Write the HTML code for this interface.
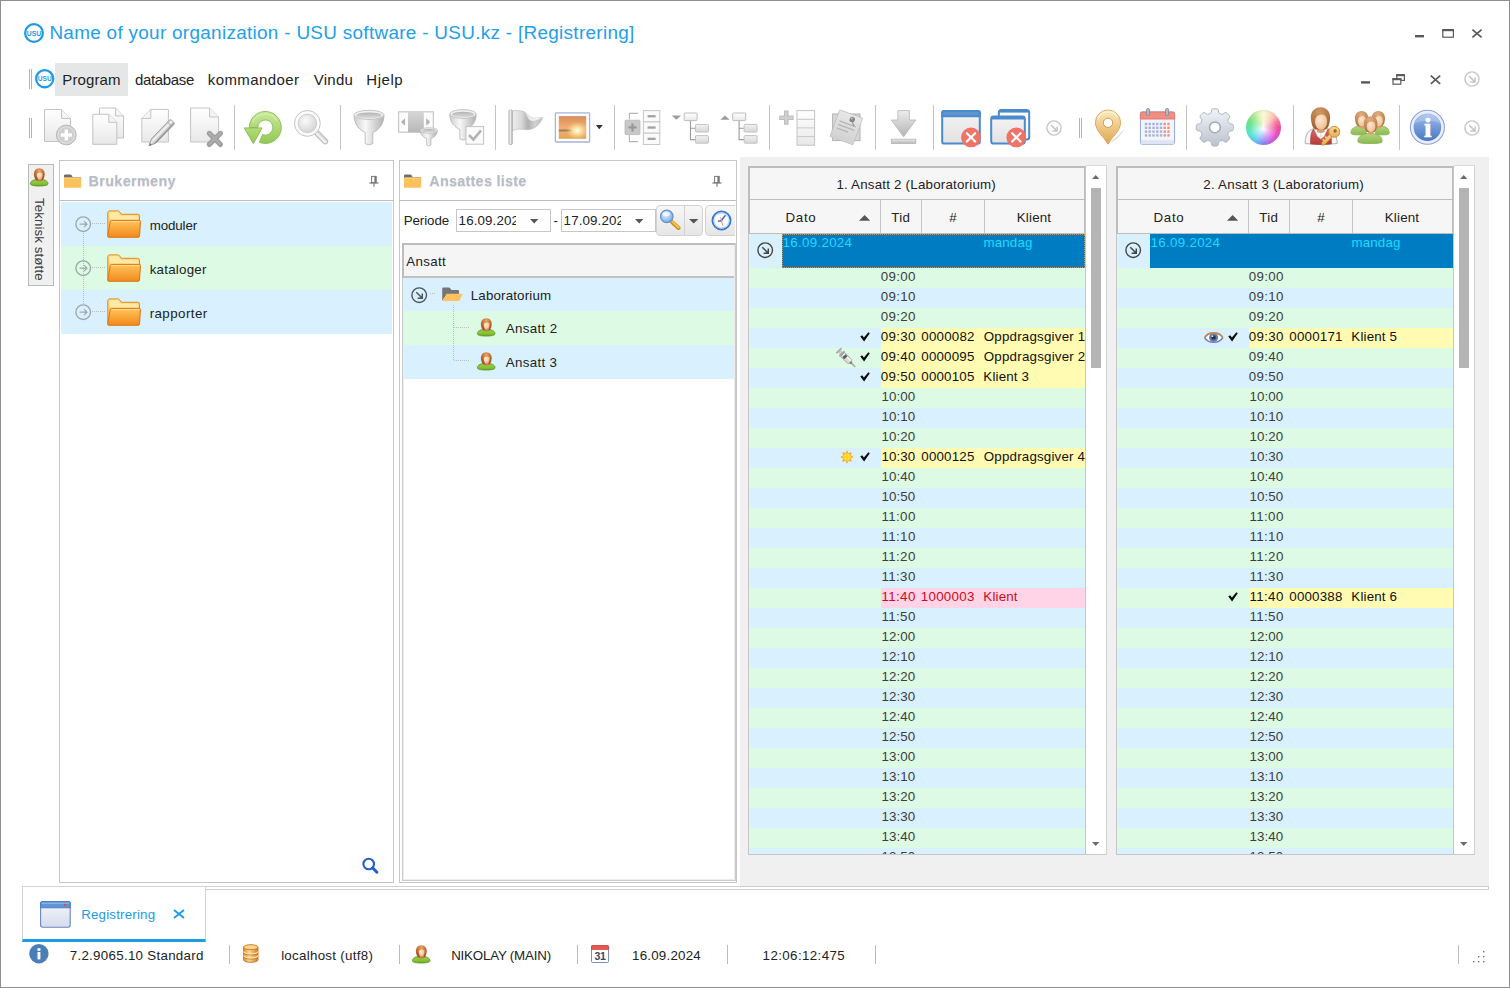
<!DOCTYPE html><html><head><meta charset="utf-8"><title>Registrering</title><style>
*{box-sizing:border-box;margin:0;padding:0}
html,body{width:1510px;height:988px;overflow:hidden;background:#fff}
body{font-family:"Liberation Sans",sans-serif;font-size:13px;color:#222;position:relative}
.a{position:absolute}
.t{position:absolute;white-space:nowrap;line-height:1}
#win{position:absolute;left:0;top:0;width:1510px;height:988px;border:1px solid #8f8f8f;background:#fff}
.sep{position:absolute;width:1px;background:#c4c4c4;top:105px;height:45px}
.grip{position:absolute;width:3px;border-left:1px solid #b4b4b4;border-right:1px solid #b4b4b4}
.panel{position:absolute;border:1px solid #c6c6c6;background:#fff}
.rb{background:#d9f1fe}.rg{background:#ddfae4}
.gh{position:absolute;background:#f6f6f6;border:1px solid #c3c3c3}
.ssep{position:absolute;width:1px;background:#bdbdbd;top:945px;height:19px}
.dh{background-image:linear-gradient(90deg,#bcbcbc 50%,transparent 50%);background-size:2px 1px}
.dv{background-image:linear-gradient(#bcbcbc 50%,transparent 50%);background-size:1px 2px}
</style></head><body>
<div id="win"></div>
<svg width="0" height="0" style="position:absolute"><defs>
<linearGradient id="gPage" x1="0" y1="0" x2="0" y2="1"><stop offset="0" stop-color="#ffffff"/><stop offset="1" stop-color="#e8e8e8"/></linearGradient>
<linearGradient id="gGray" x1="0" y1="0" x2="0" y2="1"><stop offset="0" stop-color="#ededed"/><stop offset="1" stop-color="#b4b4b4"/></linearGradient>
<linearGradient id="gGrayH" x1="0" y1="0" x2="1" y2="0"><stop offset="0" stop-color="#cdcdcd"/><stop offset=".38" stop-color="#f8f8f8"/><stop offset="1" stop-color="#b0b0b0"/></linearGradient>
<linearGradient id="gGreen" x1="0" y1="0" x2="0" y2="1"><stop offset="0" stop-color="#c9e99c"/><stop offset="1" stop-color="#93c855"/></linearGradient>
<linearGradient id="gGreen2" x1="0" y1="0" x2="0" y2="1"><stop offset="0" stop-color="#b2dc7a"/><stop offset="1" stop-color="#93c855"/></linearGradient>
<linearGradient id="gPencil" x1="0" y1="0" x2="0" y2="1"><stop offset="0" stop-color="#c9c9c9"/><stop offset=".4" stop-color="#ededed"/><stop offset="1" stop-color="#a2a2a2"/></linearGradient>
<linearGradient id="gBox" x1="0" y1="0" x2="0" y2="1"><stop offset="0" stop-color="#f2f2f2"/><stop offset="1" stop-color="#d6d6d6"/></linearGradient>
<linearGradient id="gBowlIn" x1="0" y1="0" x2="0" y2="1"><stop offset="0" stop-color="#b2b2b2"/><stop offset="1" stop-color="#dedede"/></linearGradient>
<linearGradient id="gCol" x1="0" y1="0" x2="0" y2="1"><stop offset="0" stop-color="#d6d6d6"/><stop offset="1" stop-color="#b8b8b8"/></linearGradient>
<linearGradient id="gFlag" x1="0" y1="0" x2="1" y2="0"><stop offset="0" stop-color="#ececec"/><stop offset=".3" stop-color="#dadada"/><stop offset=".52" stop-color="#b0b0b0"/><stop offset=".75" stop-color="#d2d2d2"/><stop offset="1" stop-color="#bcbcbc"/></linearGradient>
<linearGradient id="gFolder" x1="0" y1="0" x2="0" y2="1"><stop offset="0" stop-color="#ffc45c"/><stop offset="1" stop-color="#f28a1c"/></linearGradient>
<linearGradient id="gFolderB" x1="0" y1="0" x2="0" y2="1"><stop offset="0" stop-color="#ffe79a"/><stop offset="1" stop-color="#fbb544"/></linearGradient>
<linearGradient id="gGold" x1="0" y1="0" x2="0" y2="1"><stop offset="0" stop-color="#fcebc2"/><stop offset="1" stop-color="#dfa64e"/></linearGradient>
<linearGradient id="gGear" x1="0" y1="0" x2="0" y2="1"><stop offset="0" stop-color="#f1f3f7"/><stop offset="1" stop-color="#bcc2ce"/></linearGradient>
<linearGradient id="gInfo" x1="0" y1="0" x2="0" y2="1"><stop offset="0" stop-color="#9dbdec"/><stop offset="1" stop-color="#4877c4"/></linearGradient>
<linearGradient id="gSun" x1="0" y1="0" x2="0" y2="1"><stop offset="0" stop-color="#d88c5c"/><stop offset=".5" stop-color="#efae72"/><stop offset=".64" stop-color="#e8b27a"/><stop offset="1" stop-color="#e8a24e"/></linearGradient>
<radialGradient id="gSunGlow" cx=".67" cy=".64" r=".4"><stop offset="0" stop-color="#fffdf0"/><stop offset=".35" stop-color="#ffe9a8" stop-opacity=".9"/><stop offset="1" stop-color="#ffd080" stop-opacity="0"/></radialGradient>
<linearGradient id="gBtn" x1="0" y1="0" x2="0" y2="1"><stop offset="0" stop-color="#fcfcfc"/><stop offset="1" stop-color="#dedede"/></linearGradient>
<linearGradient id="gWin" x1="0" y1="0" x2="0" y2="1"><stop offset="0" stop-color="#f4f4f4"/><stop offset="1" stop-color="#e2e2e2"/></linearGradient>
<radialGradient id="gLens" cx=".4" cy=".35" r=".7"><stop offset="0" stop-color="#fbfbfb"/><stop offset="1" stop-color="#d2d2d2"/></radialGradient>
<radialGradient id="gLensB" cx=".4" cy=".35" r=".7"><stop offset="0" stop-color="#e8f4ff"/><stop offset="1" stop-color="#6aa6e8"/></radialGradient>
<radialGradient id="gWheelW" cx=".5" cy=".55" r=".5"><stop offset="0" stop-color="#fff" stop-opacity="1"/><stop offset=".35" stop-color="#fff" stop-opacity=".75"/><stop offset="1" stop-color="#fff" stop-opacity="0"/></radialGradient>
<radialGradient id="gSkin" cx=".35" cy=".3" r=".8"><stop offset="0" stop-color="#fff0dc"/><stop offset=".6" stop-color="#f8c89c"/><stop offset="1" stop-color="#d88c58"/></radialGradient>
<radialGradient id="gHair" cx=".5" cy=".22" r=".75"><stop offset="0" stop-color="#eaa868"/><stop offset=".45" stop-color="#c87438"/><stop offset="1" stop-color="#9a4a20"/></radialGradient>
<linearGradient id="gBody" x1="0" y1="0" x2="0" y2="1"><stop offset="0" stop-color="#9ccf4c"/><stop offset=".6" stop-color="#86c434"/><stop offset="1" stop-color="#6aa826"/></linearGradient>
<linearGradient id="gDb" x1="0" y1="0" x2="1" y2="0"><stop offset="0" stop-color="#e38e2c"/><stop offset=".4" stop-color="#fdd896"/><stop offset="1" stop-color="#d47e22"/></linearGradient>
<linearGradient id="gWinIco" x1="0" y1="0" x2="0" y2="1"><stop offset="0" stop-color="#f4f6fc"/><stop offset="1" stop-color="#d7dcec"/></linearGradient>
</defs></svg>
<svg class="a" style="left:23.9px;top:22.6px;overflow:visible" width="20" height="20" viewBox="0 0 20 20" ><circle cx="10.0" cy="10.0" r="8.85" fill="#fff" stroke="#1e9be6" stroke-width="2.3"/><text x="10.0" y="12.664" font-family="Liberation Sans, sans-serif" font-weight="bold" font-size="7.40" text-anchor="middle" fill="#1e9be6" textLength="14.40" lengthAdjust="spacingAndGlyphs">USU</text></svg>
<div class="t" style="left:49.39px;top:24.3px;font-size:18.9px;color:#22a0e8;letter-spacing:0.31px;">Name of your organization - USU software - USU.kz - [Registrering]</div>
<svg class="a" style="left:0px;top:0px;overflow:visible" width="1510" height="60" viewBox="0 0 1510 60" ><rect x="1415" y="35" width="9" height="2.4" fill="#5a5a5a"/><rect x="1442.8" y="30" width="10.6" height="7.2" fill="none" stroke="#5a5a5a" stroke-width="1.2"/><rect x="1442.2" y="29" width="11.8" height="2.2" fill="#5a5a5a"/><path d="M1472.4 29.6L1481.6 37.4M1481.6 29.6L1472.4 37.4" stroke="#5a5a5a" stroke-width="1.7" fill="none"/></svg>
<div class="grip" style="left:29px;top:69px;height:20px"></div>
<div class="a " style="left:55px;top:63px;width:73px;height:33px;background:#e5e6e6"></div>
<svg class="a" style="left:35.1px;top:69.2px;overflow:visible" width="19.4" height="19.4" viewBox="0 0 19.4 19.4" ><circle cx="9.7" cy="9.7" r="8.549999999999999" fill="#fff" stroke="#1e9be6" stroke-width="2.3"/><text x="9.7" y="12.28408" font-family="Liberation Sans, sans-serif" font-weight="bold" font-size="7.18" text-anchor="middle" fill="#1e9be6" textLength="13.97" lengthAdjust="spacingAndGlyphs">USU</text></svg>
<div class="t" style="left:62.3px;top:72.2px;font-size:15px;color:#222;letter-spacing:0.108px;">Program</div>
<div class="t" style="left:134.9px;top:72.2px;font-size:15px;color:#222;letter-spacing:-0.321px;">database</div>
<div class="t" style="left:207.82px;top:72.2px;font-size:15px;color:#222;letter-spacing:0.397px;">kommandoer</div>
<div class="t" style="left:313.73px;top:72.2px;font-size:15px;color:#222;letter-spacing:0.287px;">Vindu</div>
<div class="t" style="left:366.3px;top:72.2px;font-size:15px;color:#222;letter-spacing:0.525px;">Hjelp</div>
<svg class="a" style="left:0px;top:0px;overflow:visible" width="1510" height="100" viewBox="0 0 1510 100" ><rect x="1361" y="81.2" width="9" height="2.4" fill="#5a5a5a"/><rect x="1396.8" y="74.8" width="7.6" height="5.6" fill="#fff" stroke="#5a5a5a" stroke-width="1.2"/><rect x="1396.2" y="74.2" width="8.8" height="2" fill="#5a5a5a"/><rect x="1393" y="78.8" width="7.8" height="5.4" fill="#fff" stroke="#5a5a5a" stroke-width="1.2"/><rect x="1392.4" y="78.2" width="9" height="2" fill="#5a5a5a"/><path d="M1430.8 75.6L1440.2 83.8M1440.2 75.6L1430.8 83.8" stroke="#5a5a5a" stroke-width="1.7" fill="none"/></svg><svg class="a" style="left:1464px;top:71.4px;overflow:visible" width="16" height="16" viewBox="0 0 16 16" ><circle cx="8.0" cy="8.0" r="7.1" fill="none" stroke="#c6c6c6" stroke-width="1.4"/><path d="M5.1 5.1L10.9 10.9M11.1 6.4V11.1H6.4" stroke="#c6c6c6" stroke-width="1.5" fill="none"/></svg>
<div class="grip" style="left:29px;top:118px;height:20px"></div>
<div class="grip" style="left:1079px;top:118px;height:20px"></div>
<div class="sep" style="left:234px"></div>
<div class="sep" style="left:340px"></div>
<div class="sep" style="left:495px"></div>
<div class="sep" style="left:614px"></div>
<div class="sep" style="left:769px"></div>
<div class="sep" style="left:875px"></div>
<div class="sep" style="left:933px"></div>
<div class="sep" style="left:1186px"></div>
<div class="sep" style="left:1293px"></div>
<div class="sep" style="left:1399px"></div>
<svg class="a" style="left:0px;top:100px;overflow:visible" width="1510" height="55" viewBox="0 100 1510 55" ><path d="M44.5 109.5H61.5L70.5 118.5V141.5H44.5Z" fill="url(#gPage)" stroke="#c4c4c4" stroke-width="1"/><path d="M61.5 109.5V118.5H70.5" fill="#f4f4f4" stroke="#c4c4c4" stroke-width="1"/><circle cx="66.3" cy="135" r="9.9" fill="#cfcfcf" stroke="#b9b9b9" stroke-width="1"/><circle cx="66.3" cy="135" r="8.3" fill="none" stroke="#e3e3e3" stroke-width="1"/><path d="M66.3 129.4V140.6M60.7 135H71.9" stroke="#fff" stroke-width="3.4"/><path d="M99.5 108H115.5L123.5 116V138H99.5Z" fill="url(#gPage)" stroke="#c4c4c4" stroke-width="1"/><path d="M115.5 108V116H123.5" fill="#f4f4f4" stroke="#c4c4c4" stroke-width="1"/><path d="M92.8 114.3H108.8L116.8 122.3V144.3H92.8Z" fill="url(#gPage)" stroke="#c4c4c4" stroke-width="1"/><path d="M108.8 114.3V122.3H116.8" fill="#f4f4f4" stroke="#c4c4c4" stroke-width="1"/><path d="M150.8 109.4H168.4V142.0H141.8V118.4Z" fill="url(#gPage)" stroke="#c4c4c4" stroke-width="1"/><path d="M150.8 109.4V118.4H141.8" fill="#f4f4f4" stroke="#c4c4c4" stroke-width="1"/><g transform="translate(148.9 145.9) rotate(-46)"><path d="M0 0L7 -3.1H32.6Q34.2 -3.1 34.2 -1.5V1.5Q34.2 3.1 32.6 3.1H7Z" fill="url(#gPencil)" stroke="#9c9c9c" stroke-width=".9" stroke-linejoin="round"/><path d="M7 -.6H33.6" stroke="#f2f2f2" stroke-width="1.3"/><path d="M7 2.4H33.6" stroke="#8e8e8e" stroke-width=".9"/><path d="M0 0L2.8 -1.25V1.25Z" fill="#7a7a7a"/><path d="M30 -3V3" stroke="#9c9c9c" stroke-width=".8"/></g><path d="M190.6 108H209.6L218.6 117V142H190.6Z" fill="url(#gPage)" stroke="#c4c4c4" stroke-width="1"/><path d="M209.6 108V117H218.6" fill="#f4f4f4" stroke="#c4c4c4" stroke-width="1"/><path d="M209.3 133.4L220.4 144.4M220.4 133.4L209.3 144.4" stroke="#9e9e9e" stroke-width="5.2" stroke-linecap="round"/><path d="M209.3 133.2L220 143.8M220.4 133.2L209.6 143.8" stroke="#adadad" stroke-width="2.4" stroke-linecap="round"/><path d="M249.30 127.50A16.0 16.0 0 1 1 259.31 142.33L262.45 134.55A7.6 7.6 0 1 0 257.70 127.50Z" fill="url(#gGreen)" stroke="#86bc4c" stroke-width=".9"/><path d="M244.2 127.9H262.2L253.3 143.6Z" fill="url(#gGreen2)" stroke="#86bc4c" stroke-width=".9" stroke-linejoin="round"/><path d="M252.52 122.85A13.6 13.6 0 0 1 277.08 120.70" fill="none" stroke="#d3efa6" stroke-width="1.6" opacity=".8"/><path d="M315.6 131.6L325.2 141.4" stroke="#bdbdbd" stroke-width="6" stroke-linecap="round"/><path d="M315.6 131.6L325.2 141.4" stroke="#f1f1f1" stroke-width="3.6" stroke-linecap="round"/><path d="M316.6 131L326.2 140.6" stroke="#d4d4d4" stroke-width="1.4" stroke-linecap="round"/><circle cx="307.4" cy="123.4" r="12.9" fill="#fbfbfb" stroke="#c4c4c4" stroke-width="1"/><circle cx="307.4" cy="123.4" r="9.2" fill="url(#gLens)" stroke="#cdcdcd" stroke-width="1"/><path d="M354 114.89999999999999C354 125.81 361.00 130.74 365.20 132.50V143.70Q369 145.90 372.80 143.70V132.50C377.00 130.74 384 125.81 384 114.89999999999999Z" fill="url(#gGrayH)" stroke="#b4b4b4" stroke-width=".8"/><ellipse cx="369" cy="114.89999999999999" rx="15" ry="4.6" fill="#f0f0f0" stroke="#c0c0c0" stroke-width=".9"/><ellipse cx="369" cy="115.45" rx="12.60" ry="3.04" fill="url(#gBowlIn)"/><rect x="398.6" y="111.8" width="34.8" height="20.4" fill="#fcfcfc" stroke="#cbcbcb" stroke-width="1.3"/><rect x="408" y="111.8" width="15.8" height="20.4" fill="url(#gCol)"/><path d="M401 122L405 118.2V125.8Z" fill="#b2b2b2"/><path d="M430.2 122L426.2 118.2V125.8Z" fill="#b2b2b2"/><path d="M420.3 130.5C420.3 135.40 424.32 137.61 426.70 138.40V145.00Q428.8 147.20 430.90 145.00V138.40C433.28 137.61 437.3 135.40 437.3 130.5Z" fill="url(#gGrayH)" stroke="#b4b4b4" stroke-width=".8"/><ellipse cx="428.8" cy="130.5" rx="8.5" ry="2.7" fill="#f0f0f0" stroke="#c0c0c0" stroke-width=".9"/><ellipse cx="428.8" cy="130.82" rx="7.14" ry="1.78" fill="url(#gBowlIn)"/><path d="M449.8 114.0C449.8 123.55 456.10 127.86 459.80 129.40V139.00Q463 141.20 466.20 139.00V129.40C469.90 127.86 476.2 123.55 476.2 114.0Z" fill="url(#gGrayH)" stroke="#b4b4b4" stroke-width=".8"/><ellipse cx="463" cy="114.0" rx="13.2" ry="4.4" fill="#f0f0f0" stroke="#c0c0c0" stroke-width=".9"/><ellipse cx="463" cy="114.53" rx="11.09" ry="2.90" fill="url(#gBowlIn)"/><rect x="466" y="126.6" width="17.6" height="17.6" fill="#fbfbfb" stroke="#c2c2c2" stroke-width="1"/><path d="M469 135L473.4 139.6L481 130.4" stroke="#b4b4b4" stroke-width="2.6" fill="none"/><path d="M512.3 111C516 110.2 521 110.6 524.5 112C528 113.6 529 117.6 533 118.2C536 118.6 540 117.6 542.6 117.6C541.6 121 539 124.6 535.6 127C532.6 129.2 529 130 526 129.6C521.6 129 517 128.6 512.3 130.6Z" fill="url(#gFlag)" stroke="#c2c2c2" stroke-width=".8"/><path d="M524.5 112C528 113.6 529 117.6 533 118.2C536 118.6 540 117.6 542.6 117.6C539 120 534 121.6 530.6 120.6C527.6 119.6 527 114.6 524.5 112Z" fill="#fafafa" opacity=".75"/><rect x="508.9" y="110" width="3.4" height="34.6" rx="1.2" fill="url(#gGrayH)" stroke="#a9a9a9" stroke-width=".7"/><rect x="555.4" y="112.8" width="34.2" height="29.2" rx=".8" fill="#fff" stroke="#a5b4df" stroke-width="1.3"/><rect x="558.8" y="116.1" width="27.4" height="22.7" fill="url(#gSun)"/><path d="M558.8 129.6H569L574 130.6L569 131.6H558.8Z" fill="#8c6a4c" opacity=".75"/><rect x="558.8" y="116.1" width="27.4" height="22.7" fill="url(#gSunGlow)"/><path d="M595.8 125H602.8L599.3 129.2Z" fill="#333"/><path d="M638 113.4H629.4V119.6M629.4 135V141.6H638" stroke="#b5b5b5" stroke-width="1.1" fill="none"/><rect x="625" y="120.2" width="15" height="14.4" rx="1" fill="#c8c8c8" stroke="#b8b8b8" stroke-width=".8"/><path d="M632.5 123.4V131.4M628.4 127.4H636.6" stroke="#999" stroke-width="2.3"/><rect x="643.4" y="110.6" width="16.4" height="11.3" fill="#fafafa" stroke="#c6c6c6" stroke-width="1"/><rect x="647.6" y="115.1" width="8" height="2.3" fill="#a2a2a2"/><rect x="643.4" y="121.89999999999999" width="16.4" height="11.3" fill="#fafafa" stroke="#c6c6c6" stroke-width="1"/><rect x="647.6" y="126.39999999999999" width="8" height="2.3" fill="#a2a2a2"/><rect x="643.4" y="133.2" width="16.4" height="11.3" fill="#fafafa" stroke="#c6c6c6" stroke-width="1"/><rect x="647.6" y="137.7" width="8" height="2.3" fill="#a2a2a2"/><path d="M671.7 115.4H681.1L676.4000000000001 119.8Z" fill="#9d9d9d"/><path d="M690.5 120.6V139.6H695.7M690.5 128.2H695.7" stroke="#9a9a9a" stroke-width="1.1" fill="none"/><rect x="684.1" y="113" width="13" height="7.6" rx="1" fill="url(#gPage)" stroke="#bdbdbd" stroke-width="1"/><rect x="695.5" y="124.4" width="13" height="7.6" rx="1" fill="url(#gBox)" stroke="#c2c2c2" stroke-width="1"/><rect x="695.5" y="135.6" width="13" height="7.6" rx="1" fill="url(#gBox)" stroke="#c2c2c2" stroke-width="1"/><path d="M720.3 119.8H729.6999999999999L725.0 115.4Z" fill="#9d9d9d"/><path d="M739.0999999999999 120.6V139.6H744.3M739.0999999999999 128.2H744.3" stroke="#9a9a9a" stroke-width="1.1" fill="none"/><rect x="732.6999999999999" y="113" width="13" height="7.6" rx="1" fill="url(#gPage)" stroke="#bdbdbd" stroke-width="1"/><rect x="744.0999999999999" y="124.4" width="13" height="7.6" rx="1" fill="url(#gBox)" stroke="#c2c2c2" stroke-width="1"/><rect x="744.0999999999999" y="135.6" width="13" height="7.6" rx="1" fill="url(#gBox)" stroke="#c2c2c2" stroke-width="1"/><path d="M786.3 110.6V124.8M779.2 117.7H793.6" stroke="#bdbdbd" stroke-width="4.6"/><path d="M786.3 111.6V123.8M780.2 117.7H792.6" stroke="#d0d0d0" stroke-width="2.4"/><rect x="797" y="110.6" width="17.6" height="34.6" fill="url(#gPage)" stroke="#c4c4c4" stroke-width="1"/><path d="M797 119.3H814.6M797 127.9H814.6M797 136.6H814.6" stroke="#c9c9c9" stroke-width="1"/><rect x="832.6" y="114" width="27.4" height="26.6" fill="#d6d6d6" stroke="#b2b2b2" stroke-width="1"/><g transform="rotate(20 846.3 127.3)"><rect x="834.2" y="113.2" width="24.2" height="28.2" fill="url(#gGray)" stroke="#b4b4b4" stroke-width=".8"/><rect x="834.2" y="113.2" width="24.2" height="28.2" fill="#e4e4e4" opacity=".6"/><path d="M837.6 123.6H855M837.6 127.4H855M837.6 131.2H849.6" stroke="#b4b4b4" stroke-width="1.3"/><circle cx="849.2" cy="118" r="2.7" fill="#858585"/><circle cx="848.4" cy="117.2" r="1" fill="#c4c4c4"/><path d="M849.8 120.2L853.4 123.6" stroke="#9a9a9a" stroke-width="1.2"/></g><path d="M897.8 110.6H909.4V120H915.8L903.6 136.8L891.3 120H897.8Z" fill="url(#gGray)" stroke="#b5b5b5" stroke-width=".8"/><rect x="891.3" y="139.2" width="24.5" height="4.2" fill="url(#gGray)" stroke="#b5b5b5" stroke-width=".8"/><rect x="942.2" y="111" width="37.6" height="32.6" rx="2.2" fill="url(#gWin)" stroke="#4a8bcb" stroke-width="2"/><path d="M942.2 116.2V113.2Q942.2 111 944.4 111H977.6Q979.8 111 979.8 113.2V116.2Z" fill="#5f94cf" stroke="#4a8bcb" stroke-width="2"/><circle cx="971" cy="137.4" r="9.9" fill="#ef7467"/><path d="M966.842 133.24200000000002L975.158 141.558M975.158 133.24200000000002L966.842 141.558" stroke="#fff" stroke-width="2.2" stroke-linecap="round"/><rect x="998.8" y="110" width="30.4" height="29.6" rx="2.6" fill="#fbfbfb" stroke="#4a8bcb" stroke-width="2"/><path d="M999.4 111.4H1028.6" stroke="#4a8bcb" stroke-width="2.4"/><rect x="991.2" y="116.4" width="33.6" height="27.2" rx="2.4" fill="url(#gWin)" stroke="#4a8bcb" stroke-width="2"/><path d="M991.8 118H1024.2" stroke="#4a8bcb" stroke-width="2.8"/><circle cx="1016.3" cy="137.4" r="9.9" fill="#ef7467"/><path d="M1012.1419999999999 133.24200000000002L1020.458 141.558M1020.458 133.24200000000002L1012.1419999999999 141.558" stroke="#fff" stroke-width="2.2" stroke-linecap="round"/><path d="M1110 143.6C1114 138 1121 134 1124.4 128.6C1122 135 1116 140 1110 143.6Z" fill="#9a9a9a" opacity=".35"/><path d="M1108 144.2C1104 137 1095.4 130.6 1095.4 122.6A12.6 12.6 0 0 1 1120.6 122.6C1120.6 130.6 1112 137 1108 144.2Z" fill="url(#gGold)" stroke="#d9a24c" stroke-width=".9"/><circle cx="1108" cy="122.8" r="4.7" fill="#fff" stroke="#d19a48" stroke-width="1"/><path d="M1098 119.4A10.4 10.4 0 0 1 1117 116.6" stroke="#fff6d8" stroke-width="1.6" fill="none" opacity=".8"/><rect x="1140.4" y="112" width="34.2" height="32.2" rx="1.8" fill="#f3f5fc" stroke="#95a5d6" stroke-width="1"/><path d="M1140.4 119V113.8Q1140.4 112 1142.2 112H1172.8Q1174.6 112 1174.6 113.8V119Z" fill="#f08e84" stroke="#e07a70" stroke-width="1"/><rect x="1140.9" y="140.2" width="33.2" height="3.6" fill="#dfe4f5"/><rect x="1146.6" y="108.6" width="3" height="6.8" rx="1" fill="#b4bccb" stroke="#76839b" stroke-width=".8"/><rect x="1165.6" y="108.6" width="3" height="6.8" rx="1" fill="#b4bccb" stroke="#76839b" stroke-width=".8"/><rect x="1144.8" y="122.8" width="2.4" height="2.4" fill="#a6b2de"/><rect x="1148.55" y="122.8" width="2.4" height="2.4" fill="#a6b2de"/><rect x="1152.3" y="122.8" width="2.4" height="2.4" fill="#a6b2de"/><rect x="1156.05" y="122.8" width="2.4" height="2.4" fill="#a6b2de"/><rect x="1159.8" y="122.8" width="2.4" height="2.4" fill="#a6b2de"/><rect x="1163.55" y="122.8" width="2.4" height="2.4" fill="#f19080"/><rect x="1167.3" y="122.8" width="2.4" height="2.4" fill="#f19080"/><rect x="1144.8" y="126.6" width="2.4" height="2.4" fill="#a6b2de"/><rect x="1148.55" y="126.6" width="2.4" height="2.4" fill="#a6b2de"/><rect x="1152.3" y="126.6" width="2.4" height="2.4" fill="#a6b2de"/><rect x="1156.05" y="126.6" width="2.4" height="2.4" fill="#a6b2de"/><rect x="1159.8" y="126.6" width="2.4" height="2.4" fill="#a6b2de"/><rect x="1163.55" y="126.6" width="2.4" height="2.4" fill="#f19080"/><rect x="1167.3" y="126.6" width="2.4" height="2.4" fill="#f19080"/><rect x="1144.8" y="130.4" width="2.4" height="2.4" fill="#a6b2de"/><rect x="1148.55" y="130.4" width="2.4" height="2.4" fill="#a6b2de"/><rect x="1152.3" y="130.4" width="2.4" height="2.4" fill="#a6b2de"/><rect x="1156.05" y="130.4" width="2.4" height="2.4" fill="#a6b2de"/><rect x="1159.8" y="130.4" width="2.4" height="2.4" fill="#a6b2de"/><rect x="1163.55" y="130.4" width="2.4" height="2.4" fill="#f19080"/><rect x="1167.3" y="130.4" width="2.4" height="2.4" fill="#f19080"/><rect x="1144.8" y="134.2" width="2.4" height="2.4" fill="#a6b2de"/><rect x="1148.55" y="134.2" width="2.4" height="2.4" fill="#a6b2de"/><rect x="1152.3" y="134.2" width="2.4" height="2.4" fill="#a6b2de"/><rect x="1156.05" y="134.2" width="2.4" height="2.4" fill="#a6b2de"/><rect x="1159.8" y="134.2" width="2.4" height="2.4" fill="#a6b2de"/><rect x="1163.55" y="134.2" width="2.4" height="2.4" fill="#f19080"/><rect x="1167.3" y="134.2" width="2.4" height="2.4" fill="#f19080"/><path d="M1233.59 127.40L1233.58 127.89L1233.56 128.38L1233.51 128.86L1233.43 129.35L1233.28 129.82L1232.97 130.26L1232.31 130.63L1231.24 130.87L1230.16 131.06L1229.47 131.31L1229.11 131.61L1228.89 131.95L1228.72 132.29L1228.57 132.65L1228.43 133.00L1228.28 133.36L1228.14 133.71L1228.01 134.08L1227.92 134.47L1227.97 134.94L1228.28 135.60L1228.91 136.50L1229.49 137.43L1229.70 138.15L1229.61 138.69L1229.38 139.13L1229.09 139.52L1228.78 139.90L1228.45 140.26L1228.11 140.61L1227.76 140.95L1227.40 141.28L1227.02 141.59L1226.63 141.88L1226.19 142.11L1225.65 142.20L1224.93 141.99L1224.00 141.41L1223.10 140.78L1222.44 140.47L1221.97 140.42L1221.58 140.51L1221.21 140.64L1220.86 140.78L1220.50 140.93L1220.15 141.07L1219.79 141.22L1219.45 141.39L1219.11 141.61L1218.81 141.97L1218.56 142.66L1218.37 143.74L1218.13 144.81L1217.76 145.47L1217.32 145.78L1216.85 145.93L1216.36 146.01L1215.88 146.06L1215.39 146.08L1214.90 146.09L1214.41 146.08L1213.92 146.06L1213.44 146.01L1212.95 145.93L1212.48 145.78L1212.04 145.47L1211.67 144.81L1211.43 143.74L1211.24 142.66L1210.99 141.97L1210.69 141.61L1210.35 141.39L1210.01 141.22L1209.65 141.07L1209.30 140.93L1208.94 140.78L1208.59 140.64L1208.22 140.51L1207.83 140.42L1207.36 140.47L1206.70 140.78L1205.80 141.41L1204.87 141.99L1204.15 142.20L1203.61 142.11L1203.17 141.88L1202.78 141.59L1202.40 141.28L1202.04 140.95L1201.69 140.61L1201.35 140.26L1201.02 139.90L1200.71 139.52L1200.42 139.13L1200.19 138.69L1200.10 138.15L1200.31 137.43L1200.89 136.50L1201.52 135.60L1201.83 134.94L1201.88 134.47L1201.79 134.08L1201.66 133.71L1201.52 133.36L1201.37 133.00L1201.23 132.65L1201.08 132.29L1200.91 131.95L1200.69 131.61L1200.33 131.31L1199.64 131.06L1198.56 130.87L1197.49 130.63L1196.83 130.26L1196.52 129.82L1196.37 129.35L1196.29 128.86L1196.24 128.38L1196.22 127.89L1196.21 127.40L1196.22 126.91L1196.24 126.42L1196.29 125.94L1196.37 125.45L1196.52 124.98L1196.83 124.54L1197.49 124.17L1198.56 123.93L1199.64 123.74L1200.33 123.49L1200.69 123.19L1200.91 122.85L1201.08 122.51L1201.23 122.15L1201.37 121.80L1201.52 121.44L1201.66 121.09L1201.79 120.72L1201.88 120.33L1201.83 119.86L1201.52 119.20L1200.89 118.30L1200.31 117.37L1200.10 116.65L1200.19 116.11L1200.42 115.67L1200.71 115.28L1201.02 114.90L1201.35 114.54L1201.69 114.19L1202.04 113.85L1202.40 113.52L1202.78 113.21L1203.17 112.92L1203.61 112.69L1204.15 112.60L1204.87 112.81L1205.80 113.39L1206.70 114.02L1207.36 114.33L1207.83 114.38L1208.22 114.29L1208.59 114.16L1208.94 114.02L1209.30 113.87L1209.65 113.73L1210.01 113.58L1210.35 113.41L1210.69 113.19L1210.99 112.83L1211.24 112.14L1211.43 111.06L1211.67 109.99L1212.04 109.33L1212.48 109.02L1212.95 108.87L1213.44 108.79L1213.92 108.74L1214.41 108.72L1214.90 108.71L1215.39 108.72L1215.88 108.74L1216.36 108.79L1216.85 108.87L1217.32 109.02L1217.76 109.33L1218.13 109.99L1218.37 111.06L1218.56 112.14L1218.81 112.83L1219.11 113.19L1219.45 113.41L1219.79 113.58L1220.15 113.73L1220.50 113.87L1220.86 114.02L1221.21 114.16L1221.58 114.29L1221.97 114.38L1222.44 114.33L1223.10 114.02L1224.00 113.39L1224.93 112.81L1225.65 112.60L1226.19 112.69L1226.63 112.92L1227.02 113.21L1227.40 113.52L1227.76 113.85L1228.11 114.19L1228.45 114.54L1228.78 114.90L1229.09 115.28L1229.38 115.67L1229.61 116.11L1229.70 116.65L1229.49 117.37L1228.91 118.30L1228.28 119.20L1227.97 119.86L1227.92 120.33L1228.01 120.72L1228.14 121.09L1228.28 121.44L1228.43 121.80L1228.57 122.15L1228.72 122.51L1228.89 122.85L1229.11 123.19L1229.47 123.49L1230.16 123.74L1231.24 123.93L1232.31 124.17L1232.97 124.54L1233.28 124.98L1233.43 125.45L1233.51 125.94L1233.56 126.42L1233.58 126.91Z" fill="url(#gGear)" stroke="#a9afbc" stroke-width="1" stroke-linejoin="round"/><circle cx="1214.9" cy="127.4" r="5.4" fill="#fff" stroke="#a3a9b6" stroke-width="1.5"/><circle cx="1427.4" cy="127.3" r="17" fill="#e9eefa" stroke="#8da4d6" stroke-width="1.1"/><circle cx="1427.4" cy="127.3" r="13.8" fill="url(#gInfo)"/><path d="M1414.6 124A13.2 13.2 0 0 1 1440.2 124C1434 119.6 1421 119.6 1414.6 124Z" fill="#fff" opacity=".22"/><text x="1427.7" y="137" font-family="Liberation Serif, serif" font-weight="bold" font-size="27" text-anchor="middle" fill="#fff" stroke="#fff" stroke-width=".7">i</text></svg><div class="a" style="left:1246.2px;top:110px;width:35px;height:35px;border-radius:50%;background:radial-gradient(ellipse 55% 30% at 50% 13%,rgba(255,255,255,.6) 0,rgba(255,255,255,0) 100%),radial-gradient(circle at 50% 54%,rgba(255,255,255,1) 0,rgba(255,255,255,.6) 20%,rgba(255,255,255,0) 55%),conic-gradient(from 0deg,#f6f29a,#f8aa9c 12%,#f04c9a 25%,#e24cd4 37%,#9478f0 49%,#5cc4f4 58%,#56e6d0 68%,#5ee69a 77%,#86e070 88%,#f6f29a);box-shadow:inset 0 0 2px rgba(150,150,150,.45)"></div><svg class="a" style="left:0px;top:100px;overflow:visible" width="1510" height="55" viewBox="0 100 1510 55" ><path d="M1305.2 143.6C1305 136 1307.4 130.6 1313.4 128.6L1320.6 127.2L1328 128.6C1334 130.6 1337 136 1337.2 143.6Q1321 145.6 1305.2 143.6Z" fill="#f6f6f6" stroke="#a9a9a9" stroke-width=".9"/><path d="M1310.6 143.9C1310.4 137 1311 132 1313.6 129L1320.8 138.6L1328 129C1330.8 132 1331.6 137 1331.4 143.9Q1321 145 1310.6 143.9Z" fill="url(#gVest)" stroke="#a84444" stroke-width=".7"/><path d="M1314 128.4L1317.6 127.4L1320.8 133.6L1324 127.4L1327.6 128.4L1324.2 136.2L1320.8 139L1317.4 136.2Z" fill="#fff" stroke="#c4c4c4" stroke-width=".6"/><path d="M1320.8 133.8L1322.6 136L1320.8 138.4L1319 136Z" fill="#e4e4e4"/><path d="M1317.24 125.63H1324.34L1324.72 132.08Q1320.88 133.93 1316.85 132.08Z" fill="#d8a070"/><path d="M1320.50 107.20C1327.41 107.20 1330.68 112.96 1330.10 118.72C1329.72 124.25 1328.18 127.94 1325.68 129.55L1315.32 129.55C1312.82 127.94 1311.28 124.25 1310.90 118.72C1310.32 112.96 1313.59 107.20 1320.50 107.20Z" fill="url(#gHair2)"/><ellipse cx="1321.08" cy="121.72" rx="6.05" ry="8.18" fill="url(#gSkin2)"/><path d="M1313.97 117.34C1316.66 112.73 1322.42 111.81 1327.41 115.49C1324.34 114.11 1318.58 114.11 1313.97 117.34Z" fill="url(#gHair2)"/><g transform="translate(1334.3 131.8) rotate(43)"><path d="M-1.8 4.6H1.8V16.4L0 18.2L-1.8 16.4V14.4H-3.6V12.4H-1.8V10.8H-3.6V8.8H-1.8Z" fill="url(#gKey)" stroke="#c98e3c" stroke-width=".8"/><circle cx="0" cy="0" r="5.5" fill="url(#gKey)" stroke="#c98e3c" stroke-width=".9"/><circle cx="0" cy="-1.2" r="1.7" fill="#9c6a3a"/></g><path d="M1351 133.03C1351 128.53 1354.39 126.4 1358.7 126.4C1363.01 126.4 1366.4 128.53 1366.4 133.03C1366.4 134.73 1363.32 134.9 1358.7 134.9C1354.08 134.9 1351 134.73 1351 133.03Z" fill="url(#gBody2)" stroke="#86ac52" stroke-width=".8"/><path d="M1375.4 133.03C1375.4 128.53 1378.44 126.4 1382.3000000000002 126.4C1386.16 126.4 1389.2 128.53 1389.2 133.03C1389.2 134.73 1386.44 134.9 1382.3000000000002 134.9C1378.16 134.9 1375.4 134.73 1375.4 133.03Z" fill="url(#gBody2)" stroke="#86ac52" stroke-width=".8"/><path d="M1359.36 123.67H1364.24L1364.50 128.11Q1361.86 129.37 1359.09 128.11Z" fill="#d8a070"/><path d="M1361.60 111.00C1366.35 111.00 1368.60 114.96 1368.20 118.92C1367.94 122.72 1366.88 125.26 1365.16 126.36L1358.04 126.36C1356.32 125.26 1355.26 122.72 1355.00 118.92C1354.60 114.96 1356.85 111.00 1361.60 111.00Z" fill="url(#gHair3)"/><ellipse cx="1362.00" cy="120.98" rx="4.16" ry="5.62" fill="url(#gSkin2)"/><path d="M1357.11 117.97C1358.96 114.80 1362.92 114.17 1366.35 116.70C1364.24 115.75 1360.28 115.75 1357.11 117.97Z" fill="url(#gHair3)"/><path d="M1376.16 123.67H1381.04L1381.30 128.11Q1378.66 129.37 1375.89 128.11Z" fill="#d8a070"/><path d="M1378.40 111.00C1383.15 111.00 1385.40 114.96 1385.00 118.92C1384.74 122.72 1383.68 125.26 1381.96 126.36L1374.84 126.36C1373.12 125.26 1372.06 122.72 1371.80 118.92C1371.40 114.96 1373.65 111.00 1378.40 111.00Z" fill="url(#gHair3)"/><ellipse cx="1378.80" cy="120.98" rx="4.16" ry="5.62" fill="url(#gSkin2)"/><path d="M1373.91 117.97C1375.76 114.80 1379.72 114.17 1383.15 116.70C1381.04 115.75 1377.08 115.75 1373.91 117.97Z" fill="url(#gHair3)"/><path d="M1357.8 141.28C1357.8 135.93 1363.17 133.4 1370.0 133.4C1376.83 133.4 1382.2 135.93 1382.2 141.28C1382.2 143.30 1377.32 143.5 1370.0 143.5C1362.68 143.5 1357.8 143.30 1357.8 141.28Z" fill="url(#gBody2)" stroke="#86ac52" stroke-width=".8"/><path d="M1368.39 129.26H1373.42L1373.69 133.83Q1370.97 135.13 1368.12 133.83Z" fill="#d8a070"/><path d="M1370.70 116.20C1375.60 116.20 1377.91 120.28 1377.50 124.36C1377.23 128.28 1376.14 130.89 1374.37 132.03L1367.03 132.03C1365.26 130.89 1364.17 128.28 1363.90 124.36C1363.49 120.28 1365.80 116.20 1370.70 116.20Z" fill="url(#gHair3)"/><ellipse cx="1371.11" cy="126.48" rx="4.28" ry="5.79" fill="url(#gSkin2)"/><path d="M1366.08 123.38C1367.98 120.12 1372.06 119.46 1375.60 122.08C1373.42 121.10 1369.34 121.10 1366.08 123.38Z" fill="url(#gHair3)"/></svg><svg width="0" height="0" style="position:absolute"><defs><linearGradient id="gVest" x1="0" y1="0" x2="0" y2="1"><stop offset="0" stop-color="#d86464"/><stop offset="1" stop-color="#b43c3c"/></linearGradient><linearGradient id="gKey" x1="0" y1="0" x2="1" y2="1"><stop offset="0" stop-color="#fbe0a0"/><stop offset="1" stop-color="#e6a444"/></linearGradient><radialGradient id="gHair2" cx=".45" cy=".25" r=".8"><stop offset="0" stop-color="#d29a66"/><stop offset=".6" stop-color="#b27644"/><stop offset="1" stop-color="#8e5a30"/></radialGradient><radialGradient id="gHair3" cx=".45" cy=".25" r=".8"><stop offset="0" stop-color="#e2b084"/><stop offset=".6" stop-color="#c48a58"/><stop offset="1" stop-color="#a86c40"/></radialGradient><radialGradient id="gSkin2" cx=".4" cy=".35" r=".75"><stop offset="0" stop-color="#fde6cc"/><stop offset=".7" stop-color="#f2c8a0"/><stop offset="1" stop-color="#dca878"/></radialGradient><linearGradient id="gBody2" x1="0" y1="0" x2="0" y2="1"><stop offset="0" stop-color="#b2d67c"/><stop offset="1" stop-color="#8aba50"/></linearGradient></defs></svg><svg class="a" style="left:1046.2px;top:119.8px;overflow:visible" width="16" height="16" viewBox="0 0 16 16" ><circle cx="8.0" cy="8.0" r="7.1" fill="none" stroke="#c6c6c6" stroke-width="1.4"/><path d="M5.1 5.1L10.9 10.9M11.1 6.4V11.1H6.4" stroke="#c6c6c6" stroke-width="1.5" fill="none"/></svg><svg class="a" style="left:1464px;top:120px;overflow:visible" width="16" height="16" viewBox="0 0 16 16" ><circle cx="8.0" cy="8.0" r="7.1" fill="none" stroke="#c6c6c6" stroke-width="1.4"/><path d="M5.1 5.1L10.9 10.9M11.1 6.4V11.1H6.4" stroke="#c6c6c6" stroke-width="1.5" fill="none"/></svg>
<div class="a " style="left:28px;top:164px;width:26px;height:122px;background:#f0f0f0;border:1px solid #b9b9b9"></div>
<svg class="a" style="left:29.8px;top:168.3px;overflow:visible" width="18.4" height="18.4" viewBox="0 0 18.4 18.4" ><path d="M0.36 15.82C0.36 12.71 4.55 11.27 9.20 11.27C13.85 11.27 18.04 12.71 18.04 15.82C18.04 17.47 13.44 18.09 9.20 18.09C4.96 18.09 0.36 17.47 0.36 15.82Z" fill="url(#gBody)" stroke="#4f8d1f" stroke-width="0.72"/><path d="M9.30 0.21C13.02 0.21 14.89 3.10 14.68 6.62C14.47 9.72 13.44 11.78 11.99 12.71L6.82 12.71C5.17 11.78 4.13 9.72 3.93 6.62C3.72 3.10 5.58 0.21 9.30 0.21Z" fill="url(#gHair)"/><path d="M7.24 10.54H11.99L11.58 12.92Q9.61 14.06 7.65 12.92Z" fill="#c97c48"/><path d="M6.82 5.79C7.86 4.55 10.75 4.13 12.51 5.17C12.92 7.65 12.40 9.92 11.27 11.16Q9.72 12.40 8.27 11.16C7.03 9.92 6.51 7.86 6.82 5.79Z" fill="url(#gSkin)"/></svg>
<div class="t" style="left:45.7px;top:197.9px;font-size:13.3px;color:#3c3c46;transform-origin:0 0;transform:rotate(90deg);letter-spacing:.1px">Teknisk støtte</div>
<div class="panel" style="left:59px;top:160px;width:335px;height:723px"></div>
<div class="a " style="left:60px;top:200px;width:333px;height:1px;background:#bdbdbd"></div>
<svg class="a" style="left:64px;top:173.6px;overflow:visible" width="18" height="15" viewBox="0 0 18 15" ><path d="M0 3.4V1.6Q0 .4 1.2 .4H6.2Q7.2 .4 7.8 1.4L8.6 2.9H16Q17.2 2.9 17.2 4.1V5H0Z" fill="#6f6f6f"/><rect x="0" y="3.6" width="17.2" height="10.2" rx=".8" fill="#fbc25c"/><rect x="0" y="3.6" width="17.2" height="1" fill="#fdd58a"/></svg>
<div class="t" style="left:88.47px;top:173.8px;font-size:14.3px;color:#b6bcc8;letter-spacing:0.407px;font-weight:bold;text-shadow:0 1px 0 #ece6df">Brukermeny</div>
<svg class="a" style="left:369px;top:176.2px;overflow:visible" width="10" height="11" viewBox="0 0 10 11" ><rect x="2.6" y=".4" width="4.6" height="6.2" fill="#fff" stroke="#777" stroke-width="1"/><rect x="5.4" y=".4" width="1.8" height="6.2" fill="#777"/><rect x=".4" y="6.4" width="9" height="1.2" fill="#777"/><rect x="4.4" y="7.4" width="1.1" height="3.4" fill="#777"/></svg>
<div class="a rb" style="left:61px;top:202px;width:331px;height:44px;"></div>
<div class="a rg" style="left:61px;top:246px;width:331px;height:44px;"></div>
<div class="a rb" style="left:61px;top:290px;width:331px;height:44px;"></div>
<div class="a dv" style="left:83px;top:233px;width:1px;height:71px;"></div>
<div class="a dh" style="left:92px;top:223px;width:13px;height:1px;"></div>
<svg class="a" style="left:74.8px;top:215.8px;overflow:visible" width="16.4" height="16.4" viewBox="0 0 16.4 16.4" ><circle cx="8.2" cy="8.2" r="7.299999999999999" fill="none" stroke="#9ea7ac" stroke-width="1.4"/><path d="M4.6 8.2H11.799999999999999M9.0 5.199999999999999L12.0 8.2L9.0 11.2" stroke="#9ea7ac" stroke-width="1.2" fill="none"/></svg>
<svg class="a" style="left:107px;top:210px;overflow:visible" width="34" height="28" viewBox="0 0 34 28" ><path d="M.8 26V2.8Q.8 .9 2.7 .9H10.6Q12 .9 12.8 2.1L14.2 4.3H30.6Q32.5 4.3 32.5 6.2V26Z" fill="url(#gFolderB)" stroke="#e0861c" stroke-width="1"/><path d="M3 2.8H10.6L12.6 5.9H30.6V9.6H3Z" fill="#fff0b4" opacity=".7"/><path d="M1.4 27.3Q.6 27.3 .8 26.1L3.2 11.6Q3.4 10.4 4.6 10.4H32.4Q33.6 10.4 33.5 11.6L32.5 26.1Q32.4 27.3 31.2 27.3Z" fill="url(#gFolder)" stroke="#dd7712" stroke-width="1"/><path d="M4.4 11.6H32.4" stroke="#ffe0a0" stroke-width="1" opacity=".9"/></svg>
<div class="t" style="left:149.63px;top:218.72px;font-size:13.33px;color:#222;letter-spacing:-0.092px;">moduler</div>
<div class="a dh" style="left:92px;top:267px;width:13px;height:1px;"></div>
<svg class="a" style="left:74.8px;top:259.8px;overflow:visible" width="16.4" height="16.4" viewBox="0 0 16.4 16.4" ><circle cx="8.2" cy="8.2" r="7.299999999999999" fill="none" stroke="#9ea7ac" stroke-width="1.4"/><path d="M4.6 8.2H11.799999999999999M9.0 5.199999999999999L12.0 8.2L9.0 11.2" stroke="#9ea7ac" stroke-width="1.2" fill="none"/></svg>
<svg class="a" style="left:107px;top:254px;overflow:visible" width="34" height="28" viewBox="0 0 34 28" ><path d="M.8 26V2.8Q.8 .9 2.7 .9H10.6Q12 .9 12.8 2.1L14.2 4.3H30.6Q32.5 4.3 32.5 6.2V26Z" fill="url(#gFolderB)" stroke="#e0861c" stroke-width="1"/><path d="M3 2.8H10.6L12.6 5.9H30.6V9.6H3Z" fill="#fff0b4" opacity=".7"/><path d="M1.4 27.3Q.6 27.3 .8 26.1L3.2 11.6Q3.4 10.4 4.6 10.4H32.4Q33.6 10.4 33.5 11.6L32.5 26.1Q32.4 27.3 31.2 27.3Z" fill="url(#gFolder)" stroke="#dd7712" stroke-width="1"/><path d="M4.4 11.6H32.4" stroke="#ffe0a0" stroke-width="1" opacity=".9"/></svg>
<div class="t" style="left:149.63px;top:262.72px;font-size:13.33px;color:#222;letter-spacing:0.248px;">kataloger</div>
<div class="a dh" style="left:92px;top:311px;width:13px;height:1px;"></div>
<svg class="a" style="left:74.8px;top:303.8px;overflow:visible" width="16.4" height="16.4" viewBox="0 0 16.4 16.4" ><circle cx="8.2" cy="8.2" r="7.299999999999999" fill="none" stroke="#9ea7ac" stroke-width="1.4"/><path d="M4.6 8.2H11.799999999999999M9.0 5.199999999999999L12.0 8.2L9.0 11.2" stroke="#9ea7ac" stroke-width="1.2" fill="none"/></svg>
<svg class="a" style="left:107px;top:298px;overflow:visible" width="34" height="28" viewBox="0 0 34 28" ><path d="M.8 26V2.8Q.8 .9 2.7 .9H10.6Q12 .9 12.8 2.1L14.2 4.3H30.6Q32.5 4.3 32.5 6.2V26Z" fill="url(#gFolderB)" stroke="#e0861c" stroke-width="1"/><path d="M3 2.8H10.6L12.6 5.9H30.6V9.6H3Z" fill="#fff0b4" opacity=".7"/><path d="M1.4 27.3Q.6 27.3 .8 26.1L3.2 11.6Q3.4 10.4 4.6 10.4H32.4Q33.6 10.4 33.5 11.6L32.5 26.1Q32.4 27.3 31.2 27.3Z" fill="url(#gFolder)" stroke="#dd7712" stroke-width="1"/><path d="M4.4 11.6H32.4" stroke="#ffe0a0" stroke-width="1" opacity=".9"/></svg>
<div class="t" style="left:149.63px;top:306.72px;font-size:13.33px;color:#222;letter-spacing:0.439px;">rapporter</div>
<svg class="a" style="left:362px;top:858px;overflow:visible" width="18" height="18" viewBox="0 0 18 18" ><circle cx="6.7" cy="6" r="5.3" fill="#fff" stroke="#2160c4" stroke-width="2.1"/><path d="M10.8 10L14.9 14.2" stroke="#2160c4" stroke-width="3" stroke-linecap="round"/></svg>
<div class="panel" style="left:399px;top:160px;width:338px;height:723px"></div>
<div class="a " style="left:400px;top:200px;width:336px;height:1px;background:#bdbdbd"></div>
<svg class="a" style="left:404px;top:173.6px;overflow:visible" width="18" height="15" viewBox="0 0 18 15" ><path d="M0 3.4V1.6Q0 .4 1.2 .4H6.2Q7.2 .4 7.8 1.4L8.6 2.9H16Q17.2 2.9 17.2 4.1V5H0Z" fill="#6f6f6f"/><rect x="0" y="3.6" width="17.2" height="10.2" rx=".8" fill="#fbc25c"/><rect x="0" y="3.6" width="17.2" height="1" fill="#fdd58a"/></svg>
<div class="t" style="left:429.24px;top:173.8px;font-size:14.3px;color:#b6bcc8;letter-spacing:0.316px;font-weight:bold;text-shadow:0 1px 0 #ece6df">Ansattes liste</div>
<svg class="a" style="left:712px;top:176.2px;overflow:visible" width="10" height="11" viewBox="0 0 10 11" ><rect x="2.6" y=".4" width="4.6" height="6.2" fill="#fff" stroke="#777" stroke-width="1"/><rect x="5.4" y=".4" width="1.8" height="6.2" fill="#777"/><rect x=".4" y="6.4" width="9" height="1.2" fill="#777"/><rect x="4.4" y="7.4" width="1.1" height="3.4" fill="#777"/></svg>
<div class="t" style="left:403.73px;top:213.62px;font-size:13.33px;color:#222;letter-spacing:-0.076px;">Periode</div>
<div class="a " style="left:456px;top:209px;width:95px;height:23px;border:1px solid #c6c6c6;background:#fff"></div><div class="a" style="left:458px;top:211px;width:57.6px;height:20px;overflow:hidden"><div class="t" style="left:0.6000000000000227px;top:2.6200000000000045px;font-size:13.33px;color:#222;letter-spacing:0.131px">16.09.2024</div></div><svg class="a" style="left:530.4px;top:218.9px;overflow:visible" width="8.4" height="4.4" viewBox="0 0 8.4 4.4" ><path d="M0 0H8.4L4.2 4.4Z" fill="#555"/></svg>
<div class="t" style="left:553.6px;top:213.62px;font-size:13.33px;color:#222;">-</div>
<div class="a " style="left:561px;top:209px;width:95px;height:23px;border:1px solid #c6c6c6;background:#fff"></div><div class="a" style="left:563px;top:211px;width:57.6px;height:20px;overflow:hidden"><div class="t" style="left:0.6000000000000227px;top:2.6200000000000045px;font-size:13.33px;color:#222;letter-spacing:0.131px">17.09.2024</div></div><svg class="a" style="left:635.4px;top:218.9px;overflow:visible" width="8.4" height="4.4" viewBox="0 0 8.4 4.4" ><path d="M0 0H8.4L4.2 4.4Z" fill="#555"/></svg>
<div class="a" style="left:656px;top:205px;width:47px;height:31px;border:1px solid #d2d2d2;border-radius:4px;background:linear-gradient(#f7f7f7,#e6e6e6)"></div><div class="a" style="left:684px;top:206px;width:1px;height:29px;background:#d2d2d2"></div><svg class="a" style="left:659px;top:208px;overflow:visible" width="24" height="24" viewBox="0 0 24 24" ><path d="M13.2 14.2L19.6 20" stroke="#c98a1c" stroke-width="4" stroke-linecap="round"/><path d="M13.4 13.8L19.6 19.4" stroke="#f6c243" stroke-width="2.2" stroke-linecap="round"/><circle cx="7.8" cy="8.4" r="6.2" fill="url(#gLensB)" stroke="#6d8fd0" stroke-width="1.3"/><ellipse cx="7.2" cy="6" rx="3.8" ry="2.2" fill="#fff" opacity=".65"/></svg><svg class="a" style="left:688.6px;top:219.3px;overflow:visible" width="9.4" height="4.6" viewBox="0 0 9.4 4.6" ><path d="M0 0H9.4L4.7 4.6Z" fill="#555"/></svg>
<div class="a" style="left:704px;top:205px;width:31px;height:31px;overflow:hidden"><div class="a" style="left:1px;top:0;width:40px;height:31px;border:1px solid #d2d2d2;border-radius:4px;background:linear-gradient(#f7f7f7,#e6e6e6)"></div></div><svg class="a" style="left:710.5px;top:209.5px;overflow:visible" width="21" height="21" viewBox="0 0 21 21" ><circle cx="10.5" cy="10.5" r="9" fill="#fff" stroke="#3b78cc" stroke-width="2"/><circle cx="10.5" cy="10.5" r="7.6" fill="none" stroke="#b9d2f4" stroke-width="1.2"/><path d="M10.3 10.7L14.4 5.2" stroke="#4666c4" stroke-width="1.5"/><path d="M10.3 10.7L7 11.2" stroke="#4666c4" stroke-width="1.5"/><path d="M9.6 7.6L11.8 15.6" stroke="#f08a6a" stroke-width="1"/></svg>
<div class="a " style="left:402px;top:243px;width:334px;height:638px;border:1px solid #cbcbcb;background:#fff;box-shadow:inset 0 0 0 1px #ececec"></div>
<div class="a " style="left:402px;top:243px;width:333px;height:35px;border:2px solid #bdbdbd;border-bottom:none;border-right:none"></div>
<div class="a " style="left:404px;top:245px;width:330px;height:33px;background:#f5f5f5;border-bottom:2px solid #c2c2c2"></div>
<div class="t" style="left:406.2px;top:254.52px;font-size:13.33px;color:#222;letter-spacing:0.349px;">Ansatt</div>
<div class="a rb" style="left:404px;top:278px;width:330px;height:33px;"></div>
<div class="a rg" style="left:404px;top:311px;width:330px;height:34px;"></div>
<div class="a rb" style="left:404px;top:345px;width:330px;height:34px;"></div>
<svg class="a" style="left:410.9px;top:286.5px;overflow:visible" width="16.4" height="16.4" viewBox="0 0 16.4 16.4" ><circle cx="8.2" cy="8.2" r="7.299999999999999" fill="none" stroke="#4d555c" stroke-width="1.4"/><path d="M5.299999999999999 5.299999999999999L11.1 11.1M11.299999999999999 6.6V11.299999999999999H6.6" stroke="#4d555c" stroke-width="1.5" fill="none"/></svg>
<div class="a dh" style="left:430px;top:293px;width:6px;height:1px;"></div>
<svg class="a" style="left:442.2px;top:287.4px;overflow:visible" width="22" height="15" viewBox="0 0 22 15" ><path d="M.2 13.6V1.6Q.2 .4 1.4 .4H6.8Q7.8 .4 8.4 1.4L9.4 3H15.8Q17 3 17 4.2V7H5.2Z" fill="#757575"/><path d="M4.6 6.8H20.8L17.2 14H.2Z" fill="#fdc25f"/></svg>
<div class="t" style="left:470.73px;top:288.72px;font-size:13.33px;color:#222;letter-spacing:0.168px;">Laboratorium</div>
<div class="a dv" style="left:453px;top:305px;width:1px;height:56px;"></div>
<div class="a dh" style="left:454px;top:327px;width:16px;height:1px;"></div>
<div class="a dh" style="left:454px;top:360px;width:15px;height:1px;"></div>
<svg class="a" style="left:477px;top:318px;overflow:visible" width="18.4" height="18.4" viewBox="0 0 18.4 18.4" ><path d="M0.36 15.82C0.36 12.71 4.55 11.27 9.20 11.27C13.85 11.27 18.04 12.71 18.04 15.82C18.04 17.47 13.44 18.09 9.20 18.09C4.96 18.09 0.36 17.47 0.36 15.82Z" fill="url(#gBody)" stroke="#4f8d1f" stroke-width="0.72"/><path d="M9.30 0.21C13.02 0.21 14.89 3.10 14.68 6.62C14.47 9.72 13.44 11.78 11.99 12.71L6.82 12.71C5.17 11.78 4.13 9.72 3.93 6.62C3.72 3.10 5.58 0.21 9.30 0.21Z" fill="url(#gHair)"/><path d="M7.24 10.54H11.99L11.58 12.92Q9.61 14.06 7.65 12.92Z" fill="#c97c48"/><path d="M6.82 5.79C7.86 4.55 10.75 4.13 12.51 5.17C12.92 7.65 12.40 9.92 11.27 11.16Q9.72 12.40 8.27 11.16C7.03 9.92 6.51 7.86 6.82 5.79Z" fill="url(#gSkin)"/></svg>
<div class="t" style="left:505.8px;top:322.32px;font-size:13.33px;color:#222;letter-spacing:0.349px;">Ansatt 2</div>
<svg class="a" style="left:477px;top:351.6px;overflow:visible" width="18.4" height="18.4" viewBox="0 0 18.4 18.4" ><path d="M0.36 15.82C0.36 12.71 4.55 11.27 9.20 11.27C13.85 11.27 18.04 12.71 18.04 15.82C18.04 17.47 13.44 18.09 9.20 18.09C4.96 18.09 0.36 17.47 0.36 15.82Z" fill="url(#gBody)" stroke="#4f8d1f" stroke-width="0.72"/><path d="M9.30 0.21C13.02 0.21 14.89 3.10 14.68 6.62C14.47 9.72 13.44 11.78 11.99 12.71L6.82 12.71C5.17 11.78 4.13 9.72 3.93 6.62C3.72 3.10 5.58 0.21 9.30 0.21Z" fill="url(#gHair)"/><path d="M7.24 10.54H11.99L11.58 12.92Q9.61 14.06 7.65 12.92Z" fill="#c97c48"/><path d="M6.82 5.79C7.86 4.55 10.75 4.13 12.51 5.17C12.92 7.65 12.40 9.92 11.27 11.16Q9.72 12.40 8.27 11.16C7.03 9.92 6.51 7.86 6.82 5.79Z" fill="url(#gSkin)"/></svg>
<div class="t" style="left:505.8px;top:356.12px;font-size:13.33px;color:#222;letter-spacing:0.33px;">Ansatt 3</div>
<div class="a " style="left:740px;top:157px;width:749px;height:729px;background:#f0f0f0"></div>
<div class="a " style="left:748px;top:166px;width:338px;height:689px;background:#fff;border:1px solid #c6c6c6;border-top:2px solid #bdbdbd"></div><div class="a " style="left:748px;top:166px;width:2px;height:68px;background:#bdbdbd"></div><div class="a" style="left:749px;top:168px;width:336px;height:686px;overflow:hidden"><div class="a" style="left:1px;top:0;width:0;height:0"><div class="a " style="left:0px;top:0px;width:335px;height:66px;background:#f6f6f6"></div><div class="a " style="left:0px;top:31px;width:335px;height:1px;background:#bdbdbd"></div><div class="a " style="left:0px;top:65px;width:335px;height:1px;background:#bdbdbd"></div><div class="a " style="left:130px;top:32px;width:1px;height:33px;background:#c6c6c6"></div><div class="a " style="left:171px;top:32px;width:1px;height:33px;background:#c6c6c6"></div><div class="a " style="left:234px;top:32px;width:1px;height:33px;background:#c6c6c6"></div><div class="a " style="left:334px;top:0px;width:2px;height:66px;background:#bdbdbd"></div><div class="t" style="left:86.4px;top:9.52px;font-size:13.33px;color:#222;letter-spacing:0.212px;">1. Ansatt 2 (Laboratorium)</div><div class="t" style="left:35.53px;top:42.72px;font-size:13.33px;color:#222;letter-spacing:0.691px;">Dato</div><svg class="a" style="left:109px;top:47.4px;overflow:visible" width="11.2" height="5.8" viewBox="0 0 11.2 5.8" ><path d="M0 5.8H11.2L5.6 0Z" fill="#555"/></svg><div class="t" style="left:141.33px;top:42.72px;font-size:13.33px;color:#222;letter-spacing:0.269px;">Tid</div><div class="t" style="left:199.23px;top:42.72px;font-size:13.33px;color:#222;">#</div><div class="t" style="left:266.73px;top:42.72px;font-size:13.33px;color:#222;letter-spacing:0.202px;">Klient</div><div class="a rb" style="left:-1px;top:66px;width:336px;height:34px;"></div><div class="a " style="left:32px;top:66px;width:303px;height:34px;background:#007cc3;outline:1px dotted #cf8f4f;outline-offset:-1px"></div><svg class="a" style="left:7.4px;top:74.4px;overflow:visible" width="16.4" height="16.4" viewBox="0 0 16.4 16.4" ><circle cx="8.2" cy="8.2" r="7.299999999999999" fill="none" stroke="#444" stroke-width="1.4"/><path d="M5.299999999999999 5.299999999999999L11.1 11.1M11.299999999999999 6.6V11.299999999999999H6.6" stroke="#444" stroke-width="1.5" fill="none"/></svg><div class="t" style="left:32.5px;top:68.32px;font-size:13.33px;color:#19dcff;letter-spacing:0.309px;">16.09.2024</div><div class="t" style="left:233.43px;top:68.32px;font-size:13.33px;color:#19dcff;letter-spacing:0.169px;">mandag</div><div class="a rg" style="left:-1px;top:100px;width:336px;height:20px;"></div><div class="t" style="left:130.77px;top:102.02px;font-size:13.33px;color:#3d3d3d;letter-spacing:0.294px;">09:00</div><div class="a rb" style="left:-1px;top:120px;width:336px;height:20px;"></div><div class="t" style="left:130.77px;top:122.02px;font-size:13.33px;color:#3d3d3d;letter-spacing:0.294px;">09:10</div><div class="a rg" style="left:-1px;top:140px;width:336px;height:20px;"></div><div class="t" style="left:130.77px;top:142.02px;font-size:13.33px;color:#3d3d3d;letter-spacing:0.294px;">09:20</div><div class="a rb" style="left:-1px;top:160px;width:336px;height:20px;"></div><div class="a " style="left:131px;top:160px;width:204px;height:20px;background:#fffbb2"></div><div class="t" style="left:171.27px;top:162.02px;font-size:13.33px;color:#111;letter-spacing:0.224px;">0000082</div><div class="t" style="left:233.8px;top:162.02px;font-size:13.33px;color:#111;letter-spacing:0.207px;">Oppdragsgiver 1</div><svg class="a" style="left:110.2px;top:164.3px;overflow:visible" width="11" height="10" viewBox="0 0 11 10" ><path d="M.3 4.6L2.1 3.2L3.9 5.6L8.4 .2L9.8 1.2L4.1 9.4Z" fill="#0c0c0c"/></svg><div class="t" style="left:130.77px;top:162.02px;font-size:13.33px;color:#111;letter-spacing:0.294px;">09:30</div><div class="a rg" style="left:-1px;top:180px;width:336px;height:20px;"></div><div class="a " style="left:131px;top:180px;width:204px;height:20px;background:#fffbb2"></div><div class="t" style="left:171.27px;top:182.02px;font-size:13.33px;color:#111;letter-spacing:0.202px;">0000095</div><div class="t" style="left:233.8px;top:182.02px;font-size:13.33px;color:#111;letter-spacing:0.211px;">Oppdragsgiver 2</div><svg class="a" style="left:110.2px;top:184.3px;overflow:visible" width="11" height="10" viewBox="0 0 11 10" ><path d="M.3 4.6L2.1 3.2L3.9 5.6L8.4 .2L9.8 1.2L4.1 9.4Z" fill="#0c0c0c"/></svg><svg class="a" style="left:85.4px;top:179.1px;overflow:visible" width="22" height="22" viewBox="0 0 22 22" ><g transform="translate(3.3 3.1) rotate(45) scale(.87 1)"><rect x="0" y="-3.6" width="2" height="7.2" rx=".5" fill="#a9a9a9"/><rect x="2" y="-1.5" width="3.2" height="3" fill="#cfcfcf" stroke="#a9a9a9" stroke-width=".5"/><rect x="5" y="-3.6" width="2" height="7.2" rx=".5" fill="#a2a2a2"/><rect x="7" y="-2.8" width="12.4" height="5.6" rx=".8" fill="#dcdcdc" stroke="#9c9c9c" stroke-width=".9"/><rect x="7.6" y="-2.2" width="11.2" height="1.6" fill="#f4f4f4"/><rect x="9.2" y="-2.2" width="3.2" height="4.4" fill="#5e5e5e"/><path d="M19.4 -1.6L22 -.9V.9L19.4 1.6Z" fill="#7a7a7a"/><path d="M22 0H27.6" stroke="#b0a8a8" stroke-width="1.5"/></g></svg><div class="t" style="left:130.77px;top:182.02px;font-size:13.33px;color:#111;letter-spacing:0.294px;">09:40</div><div class="a rb" style="left:-1px;top:200px;width:336px;height:20px;"></div><div class="a " style="left:131px;top:200px;width:204px;height:20px;background:#fffbb2"></div><div class="t" style="left:171.27px;top:202.02px;font-size:13.33px;color:#111;letter-spacing:0.202px;">0000105</div><div class="t" style="left:233.33px;top:202.02px;font-size:13.33px;color:#111;letter-spacing:0.163px;">Klient 3</div><svg class="a" style="left:110.2px;top:204.3px;overflow:visible" width="11" height="10" viewBox="0 0 11 10" ><path d="M.3 4.6L2.1 3.2L3.9 5.6L8.4 .2L9.8 1.2L4.1 9.4Z" fill="#0c0c0c"/></svg><div class="t" style="left:130.77px;top:202.02px;font-size:13.33px;color:#111;letter-spacing:0.294px;">09:50</div><div class="a rg" style="left:-1px;top:220px;width:336px;height:20px;"></div><div class="t" style="left:131.4px;top:222.02px;font-size:13.33px;color:#3d3d3d;letter-spacing:0.135px;">10:00</div><div class="a rb" style="left:-1px;top:240px;width:336px;height:20px;"></div><div class="t" style="left:131.4px;top:242.02px;font-size:13.33px;color:#3d3d3d;letter-spacing:0.135px;">10:10</div><div class="a rg" style="left:-1px;top:260px;width:336px;height:20px;"></div><div class="t" style="left:131.4px;top:262.02px;font-size:13.33px;color:#3d3d3d;letter-spacing:0.135px;">10:20</div><div class="a rb" style="left:-1px;top:280px;width:336px;height:20px;"></div><div class="a " style="left:131px;top:280px;width:204px;height:20px;background:#fffbb2"></div><div class="t" style="left:171.27px;top:282.02px;font-size:13.33px;color:#111;letter-spacing:0.202px;">0000125</div><div class="t" style="left:233.8px;top:282.02px;font-size:13.33px;color:#111;letter-spacing:0.192px;">Oppdragsgiver 4</div><svg class="a" style="left:110.2px;top:284.3px;overflow:visible" width="11" height="10" viewBox="0 0 11 10" ><path d="M.3 4.6L2.1 3.2L3.9 5.6L8.4 .2L9.8 1.2L4.1 9.4Z" fill="#0c0c0c"/></svg><svg class="a" style="left:90.8px;top:283.2px;overflow:visible" width="12" height="12" viewBox="0 0 12 12" ><path d="M6.00 -0.20L7.42 2.58L10.38 1.62L9.42 4.58L12.20 6.00L9.42 7.42L10.38 10.38L7.42 9.42L6.00 12.20L4.58 9.42L1.62 10.38L2.58 7.42L-0.20 6.00L2.58 4.58L1.62 1.62L4.58 2.58Z" fill="#ffa61c" stroke="#ff9a14" stroke-width=".5"/><circle cx="6" cy="6" r="3.6" fill="#ffe53a"/><path d="M6 1.6V10.4M1.6 6H10.4" stroke="#ffd22c" stroke-width="1.6"/></svg><div class="t" style="left:131.4px;top:282.02px;font-size:13.33px;color:#111;letter-spacing:0.135px;">10:30</div><div class="a rg" style="left:-1px;top:300px;width:336px;height:20px;"></div><div class="t" style="left:131.4px;top:302.02px;font-size:13.33px;color:#3d3d3d;letter-spacing:0.135px;">10:40</div><div class="a rb" style="left:-1px;top:320px;width:336px;height:20px;"></div><div class="t" style="left:131.4px;top:322.02px;font-size:13.33px;color:#3d3d3d;letter-spacing:0.135px;">10:50</div><div class="a rg" style="left:-1px;top:340px;width:336px;height:20px;"></div><div class="t" style="left:131.4px;top:342.02px;font-size:13.33px;color:#3d3d3d;letter-spacing:0.385px;">11:00</div><div class="a rb" style="left:-1px;top:360px;width:336px;height:20px;"></div><div class="t" style="left:131.4px;top:362.02px;font-size:13.33px;color:#3d3d3d;letter-spacing:0.385px;">11:10</div><div class="a rg" style="left:-1px;top:380px;width:336px;height:20px;"></div><div class="t" style="left:131.4px;top:382.02px;font-size:13.33px;color:#3d3d3d;letter-spacing:0.385px;">11:20</div><div class="a rb" style="left:-1px;top:400px;width:336px;height:20px;"></div><div class="t" style="left:131.4px;top:402.02px;font-size:13.33px;color:#3d3d3d;letter-spacing:0.385px;">11:30</div><div class="a rg" style="left:-1px;top:420px;width:336px;height:20px;"></div><div class="a " style="left:131px;top:420px;width:204px;height:20px;background:#ffd4e6"></div><div class="t" style="left:170.8px;top:422.02px;font-size:13.33px;color:#cc0a24;letter-spacing:0.28px;">1000003</div><div class="t" style="left:233.33px;top:422.02px;font-size:13.33px;color:#cc0a24;letter-spacing:0.162px;">Klient</div><div class="t" style="left:131.4px;top:422.02px;font-size:13.33px;color:#cc0a24;letter-spacing:0.385px;">11:40</div><div class="a rb" style="left:-1px;top:440px;width:336px;height:20px;"></div><div class="t" style="left:131.4px;top:442.02px;font-size:13.33px;color:#3d3d3d;letter-spacing:0.385px;">11:50</div><div class="a rg" style="left:-1px;top:460px;width:336px;height:20px;"></div><div class="t" style="left:131.4px;top:462.02px;font-size:13.33px;color:#3d3d3d;letter-spacing:0.135px;">12:00</div><div class="a rb" style="left:-1px;top:480px;width:336px;height:20px;"></div><div class="t" style="left:131.4px;top:482.02px;font-size:13.33px;color:#3d3d3d;letter-spacing:0.135px;">12:10</div><div class="a rg" style="left:-1px;top:500px;width:336px;height:20px;"></div><div class="t" style="left:131.4px;top:502.02px;font-size:13.33px;color:#3d3d3d;letter-spacing:0.135px;">12:20</div><div class="a rb" style="left:-1px;top:520px;width:336px;height:20px;"></div><div class="t" style="left:131.4px;top:522.02px;font-size:13.33px;color:#3d3d3d;letter-spacing:0.135px;">12:30</div><div class="a rg" style="left:-1px;top:540px;width:336px;height:20px;"></div><div class="t" style="left:131.4px;top:542.02px;font-size:13.33px;color:#3d3d3d;letter-spacing:0.135px;">12:40</div><div class="a rb" style="left:-1px;top:560px;width:336px;height:20px;"></div><div class="t" style="left:131.4px;top:562.02px;font-size:13.33px;color:#3d3d3d;letter-spacing:0.135px;">12:50</div><div class="a rg" style="left:-1px;top:580px;width:336px;height:20px;"></div><div class="t" style="left:131.4px;top:582.02px;font-size:13.33px;color:#3d3d3d;letter-spacing:0.135px;">13:00</div><div class="a rb" style="left:-1px;top:600px;width:336px;height:20px;"></div><div class="t" style="left:131.4px;top:602.02px;font-size:13.33px;color:#3d3d3d;letter-spacing:0.135px;">13:10</div><div class="a rg" style="left:-1px;top:620px;width:336px;height:20px;"></div><div class="t" style="left:131.4px;top:622.02px;font-size:13.33px;color:#3d3d3d;letter-spacing:0.135px;">13:20</div><div class="a rb" style="left:-1px;top:640px;width:336px;height:20px;"></div><div class="t" style="left:131.4px;top:642.02px;font-size:13.33px;color:#3d3d3d;letter-spacing:0.135px;">13:30</div><div class="a rg" style="left:-1px;top:660px;width:336px;height:20px;"></div><div class="t" style="left:131.4px;top:662.02px;font-size:13.33px;color:#3d3d3d;letter-spacing:0.135px;">13:40</div><div class="a rb" style="left:-1px;top:680px;width:336px;height:20px;"></div><div class="t" style="left:131.4px;top:682.02px;font-size:13.33px;color:#3d3d3d;letter-spacing:0.135px;">13:50</div></div></div><div class="a " style="left:1086px;top:165px;width:21px;height:690px;background:#fff;border-top:1px solid #dadada;border-right:1px solid #d2d2d2;border-bottom:1px solid #c8c8c8"></div><svg class="a" style="left:1092.4px;top:175px;overflow:visible" width="7.4" height="3.9" viewBox="0 0 7.4 3.9" ><path d="M0 3.9H7.4L3.7 0Z" fill="#6c6c6c"/></svg><svg class="a" style="left:1092.4px;top:841.5px;overflow:visible" width="7.4" height="3.9" viewBox="0 0 7.4 3.9" ><path d="M0 0H7.4L3.7 3.9Z" fill="#6c6c6c"/></svg><div class="a " style="left:1091.3px;top:187.5px;width:9.7px;height:180px;background:#b4b4b4"></div>
<div class="a " style="left:1116px;top:166px;width:338px;height:689px;background:#fff;border:1px solid #c6c6c6;border-top:2px solid #bdbdbd"></div><div class="a " style="left:1116px;top:166px;width:2px;height:68px;background:#bdbdbd"></div><div class="a" style="left:1117px;top:168px;width:336px;height:686px;overflow:hidden"><div class="a" style="left:1px;top:0;width:0;height:0"><div class="a " style="left:0px;top:0px;width:335px;height:66px;background:#f6f6f6"></div><div class="a " style="left:0px;top:31px;width:335px;height:1px;background:#bdbdbd"></div><div class="a " style="left:0px;top:65px;width:335px;height:1px;background:#bdbdbd"></div><div class="a " style="left:130px;top:32px;width:1px;height:33px;background:#c6c6c6"></div><div class="a " style="left:171px;top:32px;width:1px;height:33px;background:#c6c6c6"></div><div class="a " style="left:234px;top:32px;width:1px;height:33px;background:#c6c6c6"></div><div class="a " style="left:334px;top:0px;width:2px;height:66px;background:#bdbdbd"></div><div class="t" style="left:85.23px;top:9.52px;font-size:13.33px;color:#222;letter-spacing:0.259px;">2. Ansatt 3 (Laboratorium)</div><div class="t" style="left:35.53px;top:42.72px;font-size:13.33px;color:#222;letter-spacing:0.691px;">Dato</div><svg class="a" style="left:109px;top:47.4px;overflow:visible" width="11.2" height="5.8" viewBox="0 0 11.2 5.8" ><path d="M0 5.8H11.2L5.6 0Z" fill="#555"/></svg><div class="t" style="left:141.33px;top:42.72px;font-size:13.33px;color:#222;letter-spacing:0.269px;">Tid</div><div class="t" style="left:199.23px;top:42.72px;font-size:13.33px;color:#222;">#</div><div class="t" style="left:266.73px;top:42.72px;font-size:13.33px;color:#222;letter-spacing:0.202px;">Klient</div><div class="a rb" style="left:-1px;top:66px;width:336px;height:34px;"></div><div class="a " style="left:32px;top:66px;width:303px;height:34px;background:#007cc3;"></div><svg class="a" style="left:7.4px;top:74.4px;overflow:visible" width="16.4" height="16.4" viewBox="0 0 16.4 16.4" ><circle cx="8.2" cy="8.2" r="7.299999999999999" fill="none" stroke="#444" stroke-width="1.4"/><path d="M5.299999999999999 5.299999999999999L11.1 11.1M11.299999999999999 6.6V11.299999999999999H6.6" stroke="#444" stroke-width="1.5" fill="none"/></svg><div class="t" style="left:32.5px;top:68.32px;font-size:13.33px;color:#19dcff;letter-spacing:0.309px;">16.09.2024</div><div class="t" style="left:233.43px;top:68.32px;font-size:13.33px;color:#19dcff;letter-spacing:0.169px;">mandag</div><div class="a rg" style="left:-1px;top:100px;width:336px;height:20px;"></div><div class="t" style="left:130.77px;top:102.02px;font-size:13.33px;color:#3d3d3d;letter-spacing:0.294px;">09:00</div><div class="a rb" style="left:-1px;top:120px;width:336px;height:20px;"></div><div class="t" style="left:130.77px;top:122.02px;font-size:13.33px;color:#3d3d3d;letter-spacing:0.294px;">09:10</div><div class="a rg" style="left:-1px;top:140px;width:336px;height:20px;"></div><div class="t" style="left:130.77px;top:142.02px;font-size:13.33px;color:#3d3d3d;letter-spacing:0.294px;">09:20</div><div class="a rb" style="left:-1px;top:160px;width:336px;height:20px;"></div><div class="a " style="left:131px;top:160px;width:204px;height:20px;background:#fffbb2"></div><div class="t" style="left:171.27px;top:162.02px;font-size:13.33px;color:#111;letter-spacing:0.213px;">0000171</div><div class="t" style="left:233.33px;top:162.02px;font-size:13.33px;color:#111;letter-spacing:0.163px;">Klient 5</div><svg class="a" style="left:110.2px;top:164.3px;overflow:visible" width="11" height="10" viewBox="0 0 11 10" ><path d="M.3 4.6L2.1 3.2L3.9 5.6L8.4 .2L9.8 1.2L4.1 9.4Z" fill="#0c0c0c"/></svg><svg class="a" style="left:85.6px;top:162.7px;overflow:visible" width="19.4" height="13" viewBox="0 0 19.4 13" ><path d="M.6 6.6C4 .6 15.2 .2 18.8 6.6C15.2 12.8 4 12.8 .6 6.6Z" fill="#fff"/><circle cx="9.6" cy="6.5" r="4.5" fill="#5e7fae"/><circle cx="9.6" cy="6.5" r="2.3" fill="#26344e"/><circle cx="8.4" cy="5.2" r=".9" fill="#dfe9f8"/><path d="M.6 6.6C4 .6 15.2 .2 18.8 6.6" fill="none" stroke="#c48754" stroke-width="1.9"/><path d="M.6 6.6C4 12.8 15.2 12.8 18.8 6.6" fill="none" stroke="#7d7fc4" stroke-width="1.7"/></svg><div class="t" style="left:130.77px;top:162.02px;font-size:13.33px;color:#111;letter-spacing:0.294px;">09:30</div><div class="a rg" style="left:-1px;top:180px;width:336px;height:20px;"></div><div class="t" style="left:130.77px;top:182.02px;font-size:13.33px;color:#3d3d3d;letter-spacing:0.294px;">09:40</div><div class="a rb" style="left:-1px;top:200px;width:336px;height:20px;"></div><div class="t" style="left:130.77px;top:202.02px;font-size:13.33px;color:#3d3d3d;letter-spacing:0.294px;">09:50</div><div class="a rg" style="left:-1px;top:220px;width:336px;height:20px;"></div><div class="t" style="left:131.4px;top:222.02px;font-size:13.33px;color:#3d3d3d;letter-spacing:0.135px;">10:00</div><div class="a rb" style="left:-1px;top:240px;width:336px;height:20px;"></div><div class="t" style="left:131.4px;top:242.02px;font-size:13.33px;color:#3d3d3d;letter-spacing:0.135px;">10:10</div><div class="a rg" style="left:-1px;top:260px;width:336px;height:20px;"></div><div class="t" style="left:131.4px;top:262.02px;font-size:13.33px;color:#3d3d3d;letter-spacing:0.135px;">10:20</div><div class="a rb" style="left:-1px;top:280px;width:336px;height:20px;"></div><div class="t" style="left:131.4px;top:282.02px;font-size:13.33px;color:#3d3d3d;letter-spacing:0.135px;">10:30</div><div class="a rg" style="left:-1px;top:300px;width:336px;height:20px;"></div><div class="t" style="left:131.4px;top:302.02px;font-size:13.33px;color:#3d3d3d;letter-spacing:0.135px;">10:40</div><div class="a rb" style="left:-1px;top:320px;width:336px;height:20px;"></div><div class="t" style="left:131.4px;top:322.02px;font-size:13.33px;color:#3d3d3d;letter-spacing:0.135px;">10:50</div><div class="a rg" style="left:-1px;top:340px;width:336px;height:20px;"></div><div class="t" style="left:131.4px;top:342.02px;font-size:13.33px;color:#3d3d3d;letter-spacing:0.385px;">11:00</div><div class="a rb" style="left:-1px;top:360px;width:336px;height:20px;"></div><div class="t" style="left:131.4px;top:362.02px;font-size:13.33px;color:#3d3d3d;letter-spacing:0.385px;">11:10</div><div class="a rg" style="left:-1px;top:380px;width:336px;height:20px;"></div><div class="t" style="left:131.4px;top:382.02px;font-size:13.33px;color:#3d3d3d;letter-spacing:0.385px;">11:20</div><div class="a rb" style="left:-1px;top:400px;width:336px;height:20px;"></div><div class="t" style="left:131.4px;top:402.02px;font-size:13.33px;color:#3d3d3d;letter-spacing:0.385px;">11:30</div><div class="a rg" style="left:-1px;top:420px;width:336px;height:20px;"></div><div class="a " style="left:131px;top:420px;width:204px;height:20px;background:#fffbb2"></div><div class="t" style="left:171.27px;top:422.02px;font-size:13.33px;color:#111;letter-spacing:0.202px;">0000388</div><div class="t" style="left:233.33px;top:422.02px;font-size:13.33px;color:#111;letter-spacing:0.163px;">Klient 6</div><svg class="a" style="left:110.2px;top:424.3px;overflow:visible" width="11" height="10" viewBox="0 0 11 10" ><path d="M.3 4.6L2.1 3.2L3.9 5.6L8.4 .2L9.8 1.2L4.1 9.4Z" fill="#0c0c0c"/></svg><div class="t" style="left:131.4px;top:422.02px;font-size:13.33px;color:#111;letter-spacing:0.385px;">11:40</div><div class="a rb" style="left:-1px;top:440px;width:336px;height:20px;"></div><div class="t" style="left:131.4px;top:442.02px;font-size:13.33px;color:#3d3d3d;letter-spacing:0.385px;">11:50</div><div class="a rg" style="left:-1px;top:460px;width:336px;height:20px;"></div><div class="t" style="left:131.4px;top:462.02px;font-size:13.33px;color:#3d3d3d;letter-spacing:0.135px;">12:00</div><div class="a rb" style="left:-1px;top:480px;width:336px;height:20px;"></div><div class="t" style="left:131.4px;top:482.02px;font-size:13.33px;color:#3d3d3d;letter-spacing:0.135px;">12:10</div><div class="a rg" style="left:-1px;top:500px;width:336px;height:20px;"></div><div class="t" style="left:131.4px;top:502.02px;font-size:13.33px;color:#3d3d3d;letter-spacing:0.135px;">12:20</div><div class="a rb" style="left:-1px;top:520px;width:336px;height:20px;"></div><div class="t" style="left:131.4px;top:522.02px;font-size:13.33px;color:#3d3d3d;letter-spacing:0.135px;">12:30</div><div class="a rg" style="left:-1px;top:540px;width:336px;height:20px;"></div><div class="t" style="left:131.4px;top:542.02px;font-size:13.33px;color:#3d3d3d;letter-spacing:0.135px;">12:40</div><div class="a rb" style="left:-1px;top:560px;width:336px;height:20px;"></div><div class="t" style="left:131.4px;top:562.02px;font-size:13.33px;color:#3d3d3d;letter-spacing:0.135px;">12:50</div><div class="a rg" style="left:-1px;top:580px;width:336px;height:20px;"></div><div class="t" style="left:131.4px;top:582.02px;font-size:13.33px;color:#3d3d3d;letter-spacing:0.135px;">13:00</div><div class="a rb" style="left:-1px;top:600px;width:336px;height:20px;"></div><div class="t" style="left:131.4px;top:602.02px;font-size:13.33px;color:#3d3d3d;letter-spacing:0.135px;">13:10</div><div class="a rg" style="left:-1px;top:620px;width:336px;height:20px;"></div><div class="t" style="left:131.4px;top:622.02px;font-size:13.33px;color:#3d3d3d;letter-spacing:0.135px;">13:20</div><div class="a rb" style="left:-1px;top:640px;width:336px;height:20px;"></div><div class="t" style="left:131.4px;top:642.02px;font-size:13.33px;color:#3d3d3d;letter-spacing:0.135px;">13:30</div><div class="a rg" style="left:-1px;top:660px;width:336px;height:20px;"></div><div class="t" style="left:131.4px;top:662.02px;font-size:13.33px;color:#3d3d3d;letter-spacing:0.135px;">13:40</div><div class="a rb" style="left:-1px;top:680px;width:336px;height:20px;"></div><div class="t" style="left:131.4px;top:682.02px;font-size:13.33px;color:#3d3d3d;letter-spacing:0.135px;">13:50</div></div></div><div class="a " style="left:1454px;top:165px;width:21px;height:690px;background:#fff;border-top:1px solid #dadada;border-right:1px solid #d2d2d2;border-bottom:1px solid #c8c8c8"></div><svg class="a" style="left:1460.4px;top:175px;overflow:visible" width="7.4" height="3.9" viewBox="0 0 7.4 3.9" ><path d="M0 3.9H7.4L3.7 0Z" fill="#6c6c6c"/></svg><svg class="a" style="left:1460.4px;top:841.5px;overflow:visible" width="7.4" height="3.9" viewBox="0 0 7.4 3.9" ><path d="M0 0H7.4L3.7 3.9Z" fill="#6c6c6c"/></svg><div class="a " style="left:1459.3px;top:187.5px;width:9.7px;height:180px;background:#b4b4b4"></div>
<div class="a " style="left:22px;top:886px;width:1467px;height:1px;background:#cfcfcf"></div>
<div class="a " style="left:1488px;top:886px;width:1px;height:4px;background:#cfcfcf"></div>
<div class="a " style="left:205px;top:889px;width:1284px;height:1px;background:#cfcfcf"></div>
<div class="a " style="left:22px;top:886px;width:184px;height:56px;background:#fff;border:1px solid #d4d4d4;border-bottom:3px solid #1b9ce6"></div>
<svg class="a" style="left:39.6px;top:901.2px;overflow:visible" width="31" height="27" viewBox="0 0 31 27" ><rect x=".6" y=".6" width="29.6" height="25.6" rx="2.2" fill="url(#gWinIco)" stroke="#6a86be" stroke-width="1.1"/><path d="M.6 6.8V2.8Q.6 .6 2.8 .6H28Q30.2 .6 30.2 2.8V6.8Z" fill="#5f94d6" stroke="#4d7fc6" stroke-width="1.1"/><path d="M1.6 2.2H29.2" stroke="#9cc0ec" stroke-width="1"/><rect x="24" y="2.8" width="2.2" height="2.2" fill="#e8483e"/></svg>
<div class="t" style="left:81.13px;top:908.12px;font-size:13.33px;color:#1b9ce6;letter-spacing:0.189px;">Registrering</div>
<svg class="a" style="left:174.2px;top:910.2px;overflow:visible" width="10" height="8" viewBox="0 0 10 8" ><path d="M0 0L10 8M10 0L0 8" stroke="#1b9ce6" stroke-width="1.9" fill="none"/></svg>
<svg class="a" style="left:28.9px;top:944.3px;overflow:visible" width="20" height="20" viewBox="0 0 20 20" ><circle cx="9.9" cy="9.7" r="9.7" fill="#4a7eb6"/><rect x="8.5" y="8" width="2.9" height="7.4" fill="#fff"/><rect x="8.5" y="4.2" width="2.9" height="2.7" fill="#fff"/></svg>
<div class="t" style="left:69.73px;top:948.72px;font-size:13.33px;color:#222;letter-spacing:0.289px;">7.2.9065.10 Standard</div>
<svg class="a" style="left:243.2px;top:944px;overflow:visible" width="16" height="20" viewBox="0 0 16 20" ><path d="M.6 3.2V15.8C.6 19.2 15 19.2 15 15.8V3.2Z" fill="url(#gDb)" stroke="#c4741c" stroke-width=".9"/><ellipse cx="7.8" cy="3.2" rx="7.2" ry="2.5" fill="#fcd68e" stroke="#c4741c" stroke-width=".9"/><path d="M.8 7.4C.8 10.600000000000001 14.8 10.600000000000001 14.8 7.4" fill="none" stroke="#ffe9c0" stroke-width="1.2"/><path d="M.6 8.5C.6 11.8 15 11.8 15 8.5" fill="none" stroke="#c4741c" stroke-width=".7"/><path d="M.8 11.6C.8 14.8 14.8 14.8 14.8 11.6" fill="none" stroke="#ffe9c0" stroke-width="1.2"/><path d="M.6 12.7C.6 16.0 15 16.0 15 12.7" fill="none" stroke="#c4741c" stroke-width=".7"/></svg>
<div class="t" style="left:281.13px;top:948.72px;font-size:13.33px;color:#222;letter-spacing:0.286px;">localhost (utf8)</div>
<svg class="a" style="left:411.8px;top:944.6px;overflow:visible" width="18.4" height="18.4" viewBox="0 0 18.4 18.4" ><path d="M0.36 15.82C0.36 12.71 4.55 11.27 9.20 11.27C13.85 11.27 18.04 12.71 18.04 15.82C18.04 17.47 13.44 18.09 9.20 18.09C4.96 18.09 0.36 17.47 0.36 15.82Z" fill="url(#gBody)" stroke="#4f8d1f" stroke-width="0.72"/><path d="M9.30 0.21C13.02 0.21 14.89 3.10 14.68 6.62C14.47 9.72 13.44 11.78 11.99 12.71L6.82 12.71C5.17 11.78 4.13 9.72 3.93 6.62C3.72 3.10 5.58 0.21 9.30 0.21Z" fill="url(#gHair)"/><path d="M7.24 10.54H11.99L11.58 12.92Q9.61 14.06 7.65 12.92Z" fill="#c97c48"/><path d="M6.82 5.79C7.86 4.55 10.75 4.13 12.51 5.17C12.92 7.65 12.40 9.92 11.27 11.16Q9.72 12.40 8.27 11.16C7.03 9.92 6.51 7.86 6.82 5.79Z" fill="url(#gSkin)"/></svg>
<div class="t" style="left:451.13px;top:948.72px;font-size:13.33px;color:#222;letter-spacing:-0.19px;">NIKOLAY (MAIN)</div>
<svg class="a" style="left:591px;top:945.2px;overflow:visible" width="18" height="18" viewBox="0 0 18 18" ><rect x=".5" y=".5" width="17" height="17" rx="1" fill="#fff" stroke="#7a8ccc" stroke-width="1"/><path d="M.5 4.6V1.5Q.5 .5 1.5 .5H16.5Q17.5 .5 17.5 1.5V4.6Z" fill="#e8584a" stroke="#d0483c" stroke-width=".8"/><text x="9" y="15" font-family="Liberation Sans, sans-serif" font-weight="bold" font-size="10.6" text-anchor="middle" fill="#3a4668" letter-spacing="-.3">31</text></svg>
<div class="t" style="left:632.0px;top:948.72px;font-size:13.33px;color:#222;letter-spacing:0.231px;">16.09.2024</div>
<div class="t" style="left:762.6px;top:948.72px;font-size:13.33px;color:#222;letter-spacing:0.39px;">12:06:12:475</div>
<div class="ssep" style="left:229px"></div>
<div class="ssep" style="left:399px"></div>
<div class="ssep" style="left:577px"></div>
<div class="ssep" style="left:727px"></div>
<div class="ssep" style="left:875px"></div>
<div class="ssep" style="left:1458px"></div>
<svg class="a" style="left:1473.4px;top:951.4px;overflow:visible" width="12" height="12" viewBox="0 0 12 12" ><rect x="10" y="0" width="1.4" height="1.4" fill="#6f6f6f"/><rect x="5" y="5" width="1.4" height="1.4" fill="#6f6f6f"/><rect x="10" y="5" width="1.4" height="1.4" fill="#6f6f6f"/><rect x="0" y="10" width="1.4" height="1.4" fill="#6f6f6f"/><rect x="5" y="10" width="1.4" height="1.4" fill="#6f6f6f"/><rect x="10" y="10" width="1.4" height="1.4" fill="#6f6f6f"/></svg>
</body></html>
